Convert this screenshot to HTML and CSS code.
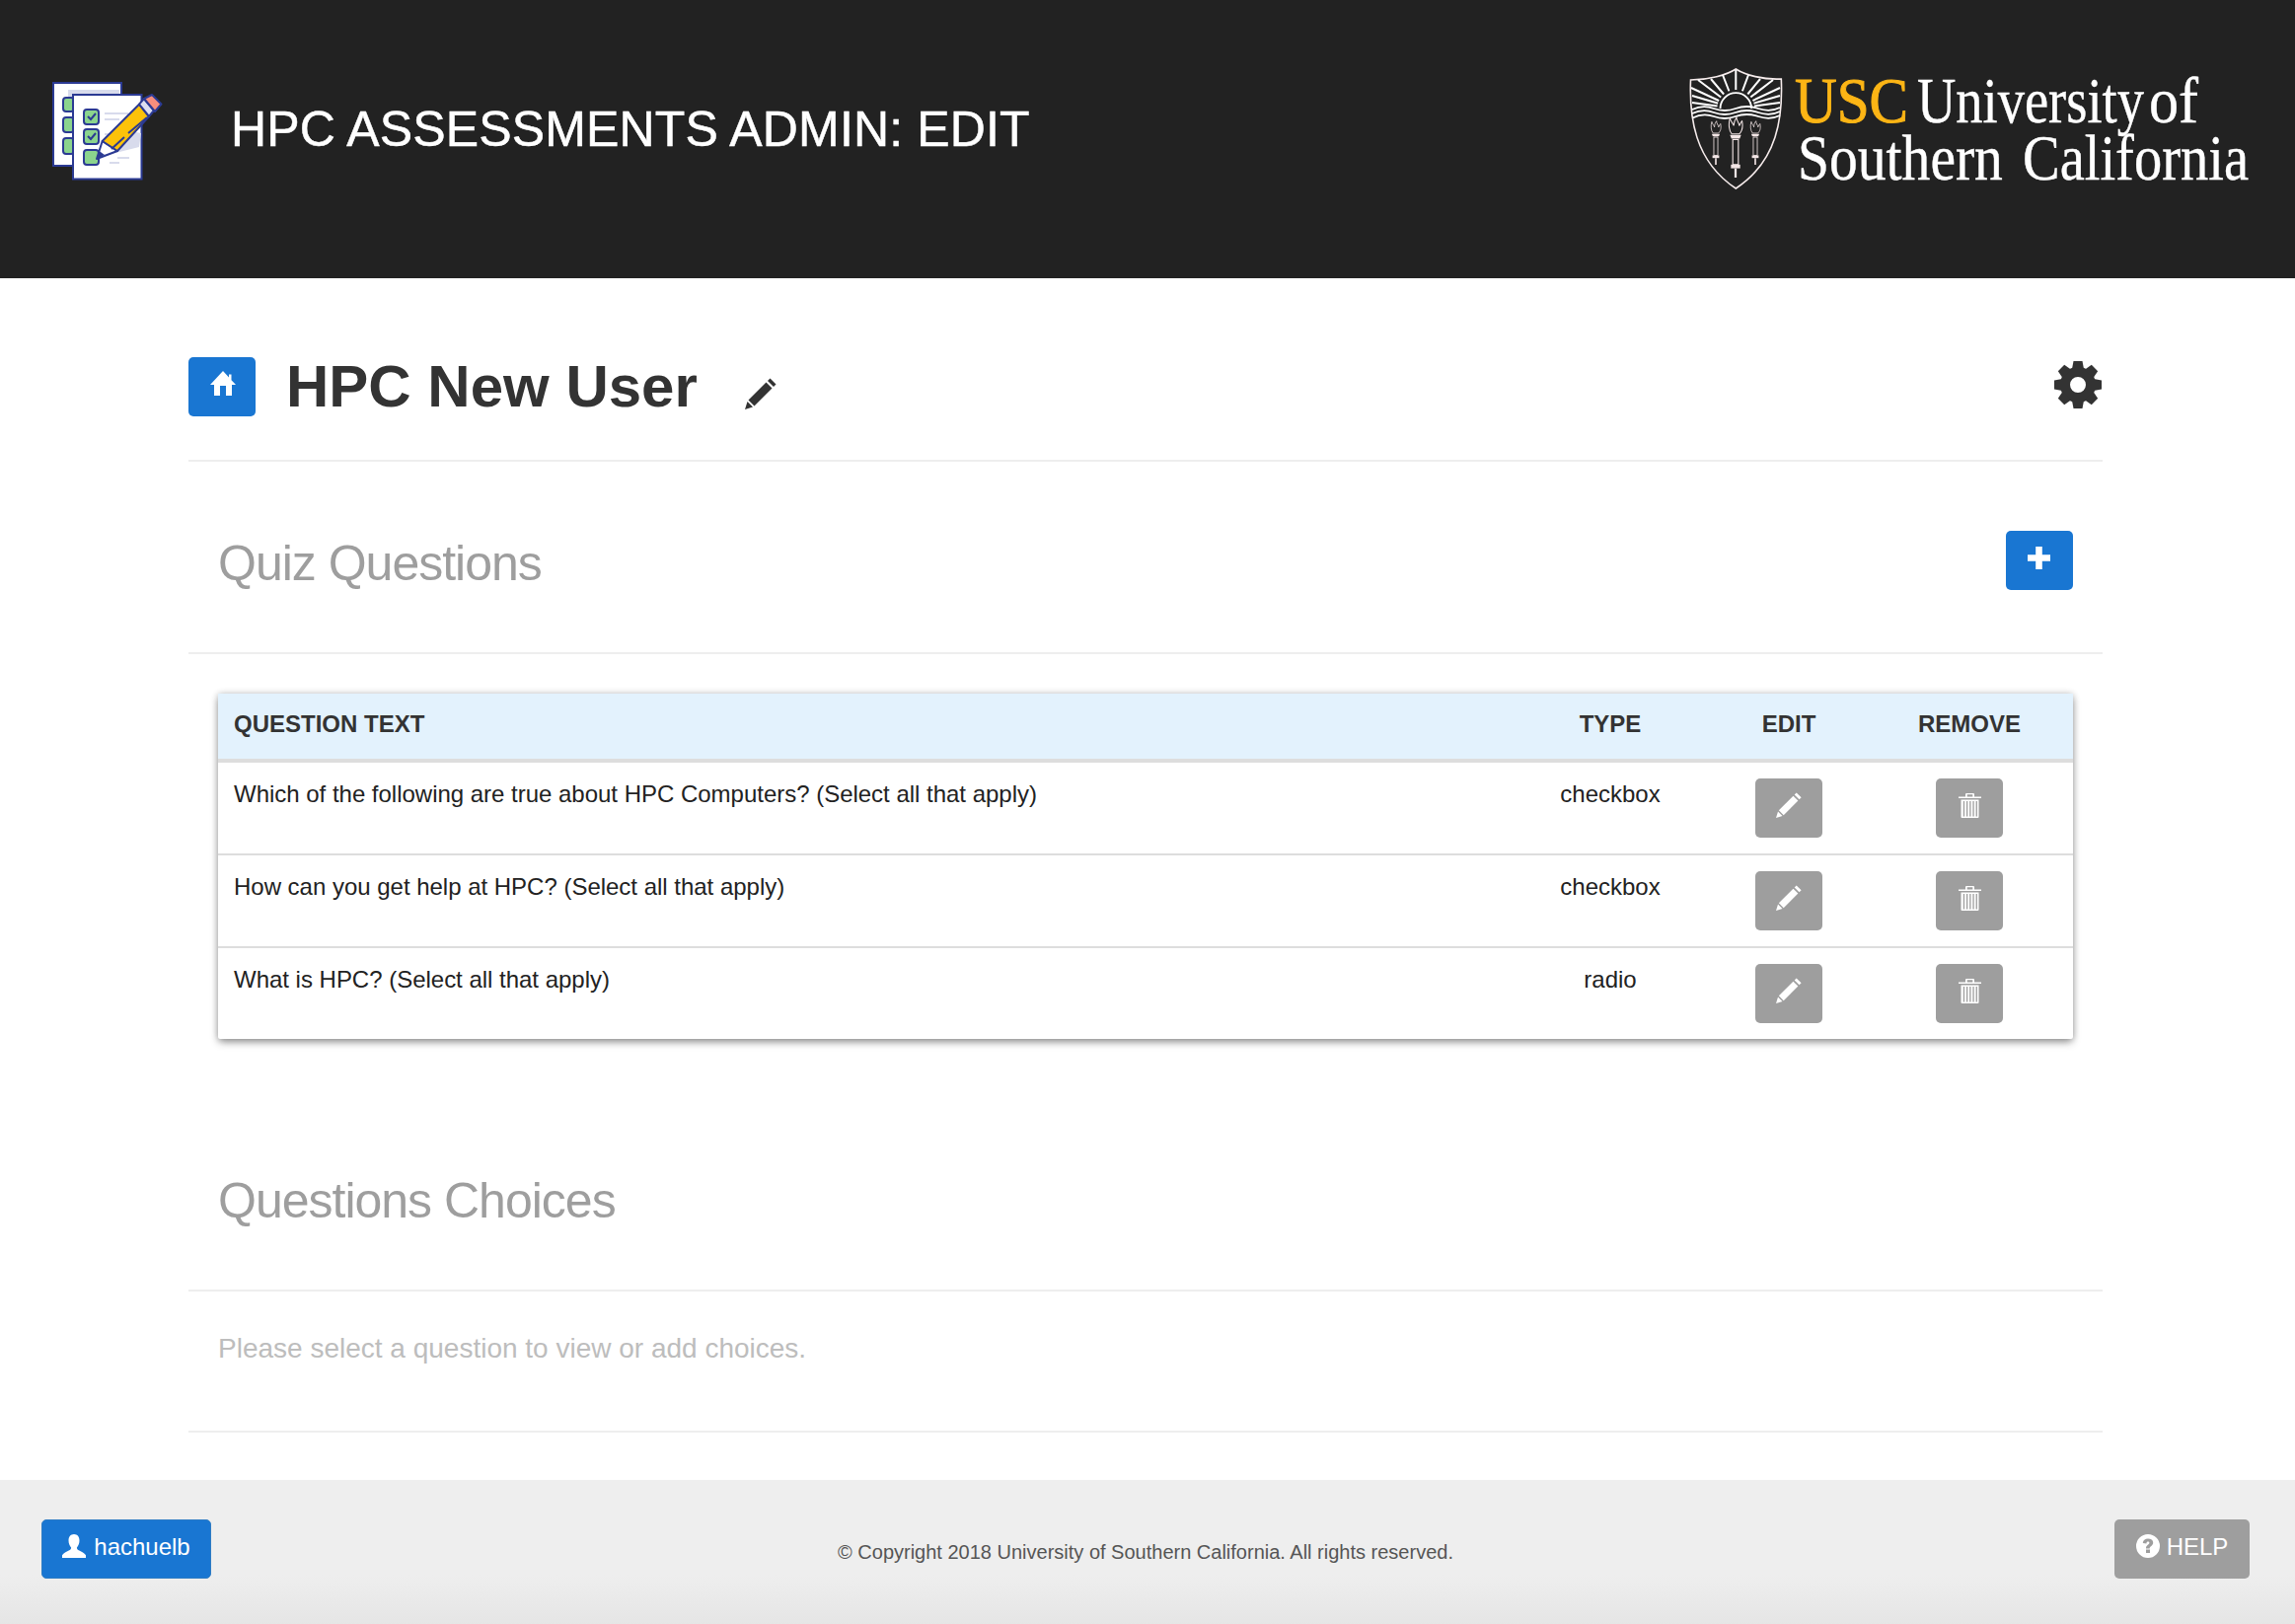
FILE: index.html
```html
<!DOCTYPE html>
<html lang="en">
<head>
<meta charset="utf-8">
<title>HPC Assessments Admin: Edit</title>
<link rel="stylesheet" href="styles.css">
</head>
<body>
<svg class="defs" aria-hidden="true">
  <symbol id="i-pencil" viewBox="0 0 32 32">
    <path d="M25.500 0.500 31.500 6.500 29 9 23 3Z"/>
    <path d="M21.500 4.500 27.500 10.500 9.500 28.500 3.500 22.500Z"/>
    <path d="M2.500 24 8 29.500 0 32Z"/>
  </symbol>
  <symbol id="i-trash" viewBox="0 0 23 25" >
    <path d="M8 0h7a1 1 0 0 1 1 1v2.500h7v1.500H0V3.500h7V1a1 1 0 0 1 1-1Zm.7 1.300v2.200h5.600V1.300Z"/>
    <path fill-rule="evenodd" d="M2.500 6.500h18v17.500a1 1 0 0 1-1 1h-16a1 1 0 0 1-1-1Zm2.300 1.500v15.500h1.300V8Zm3.200 0v15.500h1.300V8Zm3.200 0v15.500h1.300V8Zm3.200 0v15.500h1.300V8Zm3.200 0v15.500h1.300V8Z"/>
  </symbol>
  <symbol id="i-torch" viewBox="0 0 20 66">
    <path d="M4 2c1 4 3 5 4 8 0-4 1-6 3-9 0 4 3 6 3 9 1-2 2-4 3-5 1 5 1 10-3 14H6C3 16 2 8 4 2Z" fill="none" stroke="#f3e6e6" stroke-width="1.100"/>
    <path d="M4 20h12l-1.500 4h-9Z" fill="#f3e6e6"/>
    <path d="M7 25h6v27H7Z" fill="none" stroke="#f3e6e6" stroke-width="1.200"/>
    <path d="M5 52h10v4H5Z" fill="#f3e6e6"/>
    <path d="M10 56v10" stroke="#f3e6e6" stroke-width="2.400"/>
  </symbol>
</svg>

<header class="topbar">
  <svg class="app-logo" viewBox="0 0 112 100" width="112" height="100" role="img" aria-label="Assessment checklist">
    <rect x="1" y="1" width="69" height="84" fill="#fff" stroke="#2b3a93" stroke-width="2"/>
    <rect x="16" y="8" width="52" height="8" fill="#d8dbec"/>
    <g fill="#8bd48d" stroke="#2b3a93" stroke-width="2">
      <rect x="11" y="16" width="11" height="14" rx="3"/>
      <rect x="11" y="36" width="11" height="15" rx="3"/>
      <rect x="11" y="57" width="11" height="16" rx="3"/>
    </g>
    <rect x="21" y="13" width="69.500" height="85.500" fill="#fff" stroke="#2b3a93" stroke-width="2"/>
    <g fill="#8bd48d" stroke="#2b3a93" stroke-width="2">
      <rect x="32" y="28" width="15" height="15" rx="3"/>
      <rect x="32" y="48" width="15" height="15" rx="3"/>
      <rect x="32" y="69" width="15" height="15" rx="3"/>
    </g>
    <path d="M36 35l3 3 5-6M36 55l3 3 5-6" fill="none" stroke="#2b3a93" stroke-width="2"/>
    <path d="M53 32h24M53 38h15M53 53h8M66 77h12M58 82h10" stroke="#d8dbec" stroke-width="2"/>
    <path d="M90 52 88 66 56 74 80 50Z" fill="#d8dbec"/>
    <path d="M45 78 50.700 60 66 70Z" fill="#fff" stroke="#2b3a93" stroke-width="2" stroke-linejoin="round"/>
    <path d="M45 78 47.500 70 53 74Z" fill="#2b3a93"/>
    <path d="M50.700 60 88 22.700 98 35 66 70Z" fill="#fcc20a" stroke="#2b3a93" stroke-width="2" stroke-linejoin="round"/>
    <path d="M60 68 73 56M77 52 96 36" stroke="#2b3a93" stroke-width="2"/>
    <path d="M88 22.700 93 17 103 29 98 35Z" fill="#dcdff0" stroke="#2b3a93" stroke-width="2" stroke-linejoin="round"/>
    <path d="M93 17 101 13 110.500 22.500 104 30Z" fill="#f78e7d" stroke="#2b3a93" stroke-width="2" stroke-linejoin="round"/>
  </svg>
  <h1 class="app-title">HPC ASSESSMENTS ADMIN: EDIT</h1>
  <svg class="usc-logo" viewBox="0 0 568 128" width="568" height="128" role="img" aria-label="USC University of Southern California">
    <path d="M47.300 2C38 8 20 13 1.500 13 0 50 5 95 47.300 123 90 95 95 50 93.300 12 75 13 57 8 47.300 2Z" fill="#222" stroke="#f6ecec" stroke-width="1.600"/>
    <g stroke="#fff" stroke-width="2">
      <path d="M47.300 42 3 36M47.300 42 3 29M47.300 42 2 21M47.300 42 9 13M47.300 42 22 12M47.300 42 34 8M47.300 42 47.300 3M47.300 42 60 8M47.300 42 72 12M47.300 42 85 13M47.300 42 92 21M47.300 42 92 29M47.300 42 92 36"/>
    </g>
    <circle cx="47.300" cy="42" r="19" fill="#222"/>
    <path d="M31.500 42a15.800 15.800 0 0 1 31.600 0" fill="none" stroke="#fff" stroke-width="1.800"/>
    <path d="M3 43Q14 38 25 42T47 42 70 42 92 41" fill="none" stroke="#fff" stroke-width="1.800"/>
    <path d="M3 47Q14 42 25 46T47 46 70 46 92 45" fill="none" stroke="#fff" stroke-width="1.800"/>
    <path d="M3.500 51.500Q14 46 25 50T47 50 70 50 92 49" fill="none" stroke="#fff" stroke-width="1.800"/>
    <use href="#i-torch" x="35" y="50" width="24" height="62"/>
    <use href="#i-torch" x="17" y="54" width="20" height="45"/>
    <use href="#i-torch" x="57" y="54" width="20" height="45"/>
    <text class="usc-word" transform="translate(107 56) scale(.91 1)">USC</text>
    <text class="usc-name" transform="translate(231 56) scale(.838 1)">University</text>
    <text class="usc-name" transform="translate(466 56) scale(.925 1)">of</text>
    <text class="usc-name" transform="translate(110 114) scale(.886 1)">Southern</text>
    <text class="usc-name" transform="translate(338 114) scale(.869 1)">California</text>
  </svg>
</header>

<main class="page">
  <div class="title-row">
    <a class="btn btn-blue btn-square" href="#" aria-label="Home">
      <svg class="icon icon-home" width="26" height="25" viewBox="0 0 26 25"><path d="M13 0 19 6.500V3.500H21.500V9.200L26 14H22V25H16V15H10V25H4V14H0Z"/></svg>
    </a>
    <h2 class="quiz-name">HPC New User</h2>
    <svg class="title-pencil" width="32" height="32" viewBox="0 0 32 32"><use href="#i-pencil"/></svg>
    <svg class="gear" width="48" height="48" viewBox="0 0 48 48">
      <circle cx="24" cy="24" r="13" fill="none" stroke="#333" stroke-width="10"/>
      <g fill="#333">
        <path d="M19.500 0h9l1.500 8H18Z"/>
        <path d="M19.500 0h9l1.500 8H18Z" transform="rotate(45 24 24)"/>
        <path d="M19.500 0h9l1.500 8H18Z" transform="rotate(90 24 24)"/>
        <path d="M19.500 0h9l1.500 8H18Z" transform="rotate(135 24 24)"/>
        <path d="M19.500 0h9l1.500 8H18Z" transform="rotate(180 24 24)"/>
        <path d="M19.500 0h9l1.500 8H18Z" transform="rotate(225 24 24)"/>
        <path d="M19.500 0h9l1.500 8H18Z" transform="rotate(270 24 24)"/>
        <path d="M19.500 0h9l1.500 8H18Z" transform="rotate(315 24 24)"/>
      </g>
    </svg>
  </div>
  <hr class="rule">

  <section class="section-head section-head-quiz">
    <h3 class="section-title">Quiz Questions</h3>
    <a class="btn btn-blue btn-square" href="#" aria-label="Add question">
      <svg class="icon icon-plus" width="23" height="23" viewBox="0 0 23 23"><path d="M8.200 0h6.600v8.200H23v6.600h-8.200V23H8.200v-8.200H0V8.200h8.200Z"/></svg>
    </a>
  </section>
  <hr class="rule">

  <div class="table-wrap">
    <table class="questions">
      <colgroup>
        <col>
        <col class="col-type">
        <col class="col-edit">
        <col class="col-remove">
      </colgroup>
      <thead>
        <tr>
          <th class="left">QUESTION TEXT</th>
          <th>TYPE</th>
          <th>EDIT</th>
          <th>REMOVE</th>
        </tr>
      </thead>
      <tbody>
        <tr>
          <td class="left">Which of the following are true about HPC Computers? (Select all that apply)</td>
          <td>checkbox</td>
          <td><a class="btn btn-gray btn-square" href="#" aria-label="Edit"><svg class="icon icon-lift" width="26" height="26"><use href="#i-pencil"/></svg></a></td>
          <td><a class="btn btn-gray btn-square" href="#" aria-label="Remove"><svg class="icon icon-lift" width="23" height="25"><use href="#i-trash"/></svg></a></td>
        </tr>
        <tr>
          <td class="left">How can you get help at HPC? (Select all that apply)</td>
          <td>checkbox</td>
          <td><a class="btn btn-gray btn-square" href="#" aria-label="Edit"><svg class="icon icon-lift" width="26" height="26"><use href="#i-pencil"/></svg></a></td>
          <td><a class="btn btn-gray btn-square" href="#" aria-label="Remove"><svg class="icon icon-lift" width="23" height="25"><use href="#i-trash"/></svg></a></td>
        </tr>
        <tr>
          <td class="left">What is HPC? (Select all that apply)</td>
          <td>radio</td>
          <td><a class="btn btn-gray btn-square" href="#" aria-label="Edit"><svg class="icon icon-lift" width="26" height="26"><use href="#i-pencil"/></svg></a></td>
          <td><a class="btn btn-gray btn-square" href="#" aria-label="Remove"><svg class="icon icon-lift" width="23" height="25"><use href="#i-trash"/></svg></a></td>
        </tr>
      </tbody>
    </table>
  </div>

  <section class="section-head section-head-choices">
    <h3 class="section-title">Questions Choices</h3>
  </section>
  <hr class="rule">
  <p class="hint">Please select a question to view or add choices.</p>
  <hr class="rule">
</main>

<footer class="footer">
  <a class="btn btn-blue btn-user" href="#">
    <svg class="icon icon-lift" width="24" height="24" viewBox="0 0 24 24"><path d="M12 0c3.600 0 5.500 2.800 5.500 6.200 0 3-1 5.600-2.600 7.200 0 1.500.6 2.300 2.400 3.200 2.400 1.200 5.200 2.600 6.700 4.700V24H0v-2.700c1.500-2.100 4.300-3.500 6.700-4.700 1.800-.9 2.400-1.700 2.400-3.200C7.500 11.800 6.500 9.200 6.500 6.200 6.500 2.800 8.400 0 12 0Z"/></svg>
    <span class="btn-label">hachuelb</span>
  </a>
  <p class="copyright">© Copyright 2018 University of Southern California. All rights reserved.</p>
  <a class="btn btn-gray btn-help" href="#">
    <svg class="icon icon-lift" width="24" height="24" viewBox="0 0 24 24"><path fill-rule="evenodd" d="M12 0a12 12 0 1 1 0 24 12 12 0 0 1 0-24Zm-2 15.500V19h4v-3.500Zm2-11c-3 0-5 1.700-5.200 4.500l3.600.4c.1-1.200.7-1.800 1.600-1.800.8 0 1.400.5 1.400 1.200 0 .8-.6 1.200-1.500 1.900-1.200.9-1.900 1.800-1.900 3.300v.5h3.700c0-1 .4-1.500 1.300-2.200 1.300-1 2.200-2 2.200-3.700 0-2.700-2.200-4.100-5.200-4.100Z"/></svg>
    <span class="btn-label">HELP</span>
  </a>
</footer>
</body>
</html>
```

FILE: styles.css
```css
* { box-sizing: border-box; }

html, body {
  margin: 0;
  padding: 0;
}

body {
  min-height: 1646px;
  background: #fff;
  color: #333;
  font-family: "Liberation Sans", Arial, sans-serif;
  font-size: 24px;
  line-height: 34px;
}

.defs {
  display: none;
}

.topbar {
  display: flex;
  align-items: center;
  height: 282px;
  padding: 0 46px 18px 53px;
  background: #222;
}

.app-logo {
  flex: none;
  margin-top: 2px;
}

.app-title {
  margin: 0 0 2px 69px;
  color: #fff;
  font-size: 50px;
  font-weight: 400;
  letter-spacing: 0.15px;
  line-height: 55px;
  white-space: nowrap;
  -webkit-text-stroke: 0.5px #fff;
}

.usc-logo {
  flex: none;
  margin-left: auto;
}

.usc-word {
  fill: #fcb515;
  stroke: #fcb515;
  stroke-width: 1px;
  font-family: "Liberation Serif", "Times New Roman", serif;
  font-size: 65px;
}

.usc-name {
  fill: #fff;
  stroke: #fff;
  stroke-width: 0.4px;
  font-family: "Liberation Serif", "Times New Roman", serif;
  font-size: 65px;
}

.page {
  width: 1940px;
  margin-left: 191px;
  padding-top: 80px;
}

.title-row {
  display: flex;
  align-items: center;
  height: 60px;
}

.quiz-name {
  margin: 0 0 0 31px;
  color: #333;
  font-size: 60px;
  font-weight: 700;
  line-height: 66px;
}

.title-pencil {
  margin: 14px 0 0 48px;
  fill: #333;
}

.gear {
  margin: -5px 1px 0 auto;
}

.rule {
  height: 2px;
  margin: 0;
  border: 0;
  background: #eee;
}

.title-row + .rule {
  margin-top: 44px;
}

.btn {
  display: inline-flex;
  align-items: center;
  justify-content: center;
  height: 60px;
  border-radius: 5px;
  color: #fff;
  text-decoration: none;
}

.btn-square {
  width: 68px;
  flex: none;
}

.btn-blue {
  background: #1976d2;
}

.btn-gray {
  background: #9e9e9e;
}

.icon {
  display: block;
  flex: none;
  fill: #fff;
}

.icon-lift {
  margin-bottom: 6px;
}

.icon-home {
  margin: 0 0 7px 2px;
}

.icon-plus {
  margin: 0 2px 5px 0;
}

.btn-label {
  margin-bottom: 5px;
}

.section-head {
  display: flex;
  align-items: center;
  justify-content: space-between;
  height: 60px;
  padding: 0 30px;
}

.section-head-quiz {
  margin: 70px 0 63px;
}

.section-head-choices {
  margin: 131px 0 63px;
}

.section-title {
  margin: 7px 0 0;
  color: #9e9e9e;
  font-size: 50px;
  font-weight: 400;
  letter-spacing: -1px;
  line-height: 55px;
}

.table-wrap {
  width: 1880px;
  margin: 40px 0 0 30px;
  background: #fff;
  box-shadow: 0 4px 8px -1px rgba(0, 0, 0, 0.4), 0 0 7px rgba(0, 0, 0, 0.2);
  border-radius: 2px;
}

.questions {
  width: 100%;
  border-collapse: separate;
  border-spacing: 0;
  table-layout: fixed;
}

.col-type { width: 206px; }
.col-edit { width: 156px; }
.col-remove { width: 210px; }

.questions th,
.questions td {
  text-align: center;
  vertical-align: top;
}

.questions th {
  height: 70px;
  padding: 14px 16px 18px;
  background: #e3f2fd;
  border-bottom: 4px solid #ddd;
  color: #333;
  font-weight: 700;
}

.questions td {
  padding: 15px 16px 16px;
  color: #222;
  letter-spacing: -0.015px;
}

.questions td .btn {
  display: flex;
  margin: 1px auto 0;
}

.questions tbody tr + tr td {
  border-top: 2px solid #ddd;
}

.questions .left {
  text-align: left;
}

.hint {
  margin: 40px 0 65px 30px;
  color: #bdbdbd;
  font-size: 28px;
  line-height: 36px;
}

.footer {
  display: grid;
  grid-template-columns: 1fr auto 1fr;
  align-items: start;
  height: 148px;
  margin-top: 48px;
  padding: 40px 46px 0 42px;
  background: linear-gradient(#eee 65%, #e5e5e5 100%);
}

.btn-user {
  justify-self: start;
  width: 172px;
  gap: 8px;
  border: 1px solid #2e7cc4;
}

.btn-help {
  justify-self: end;
  width: 137px;
  gap: 7px;
}

.copyright {
  margin: 16px 0 0;
  color: #555;
  font-size: 20px;
  line-height: 34px;
}
```
